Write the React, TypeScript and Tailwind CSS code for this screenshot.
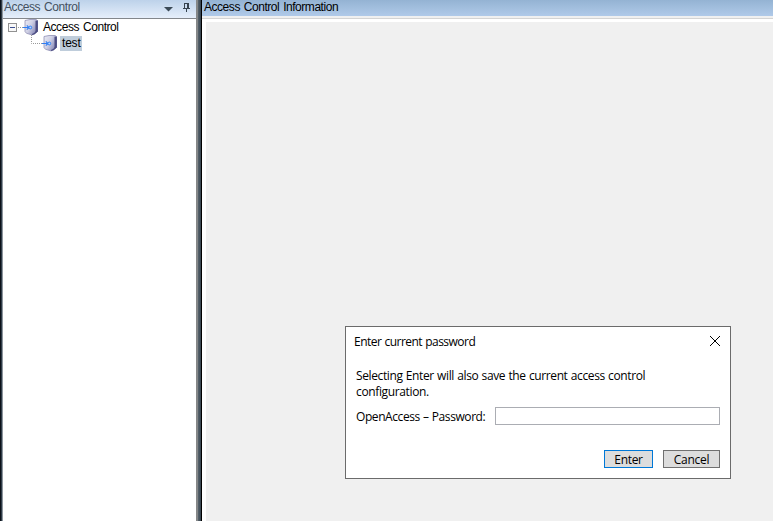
function ShieldIcon() {
  return (
    <svg width="17" height="17" viewBox="0 0 17 17" className="block shrink-0">
      <defs>
        <linearGradient id="shield" x1="0" y1="0" x2="1" y2="0.6">
          <stop offset="0" stopColor="#ececf5" />
          <stop offset="0.5" stopColor="#cfd0e4" />
          <stop offset="1" stopColor="#8789b6" />
        </linearGradient>
      </defs>
      <path d="M2 1.5 L7 0.5 H13 L14.5 1.5 V12.5 L11.5 15 L9 15.9 L3.5 14.3 L2 12.5Z" fill="url(#shield)" stroke="#9091b5" strokeWidth="0.8" />
      <path d="M12.5 1.7 L14.9 1.5 V12.5 L11.5 15.3 L9 16 V15 L11.5 13.7 L12.5 12Z" fill="#4c4d82" />
      <path d="M0 8.5 H6 M3.8 6.3 L6 8.5 L3.8 10.7" fill="none" stroke="#2f7df2" strokeWidth="1.1" />
      <circle cx="7.3" cy="8.5" r="1.4" fill="#b9d6ff" stroke="#2f7df2" strokeWidth="1" />
    </svg>
  );
}

function Tree() {
  return (
    <div className="text-[12px] leading-4 text-black">
      <div className="flex h-4 items-center pl-[5px]">
        <svg width="9" height="9" className="shrink-0">
          <rect x="0.5" y="0.5" width="8" height="8" fill="#f8f8f8" stroke="#919191" />
          <path d="M2 4.5H7" stroke="#3c4f91" />
        </svg>
        <svg width="6" height="1" className="shrink-0"><path d="M1 .5H6" stroke="#999" strokeDasharray="1 1" /></svg>
        <ShieldIcon />
        <span className="ml-[3px] whitespace-nowrap tracking-[-0.44px] [word-spacing:1px]">Access Control</span>
      </div>
      <div className="flex h-4 items-center pl-[28px]">
        <svg width="11" height="16" className="shrink-0"><path d="M.5 0V8.5H11" fill="none" stroke="#999" strokeDasharray="1 1" /></svg>
        <ShieldIcon />
        <span className="ml-px h-[15px] w-[22px] bg-[#bfcddb] pl-[2px] leading-[15px] tracking-[-0.2px]">test</span>
      </div>
    </div>
  );
}

function PasswordDialog() {
  return (
    <div className="absolute left-[345px] top-[326px] flex h-[153px] w-[386px] flex-col border border-[#6b6b6b] bg-white font-['Open_Sans','Noto_Sans',sans-serif] text-[12px] text-black">
      <div className="flex h-[30px] items-center justify-between pl-2 pr-[9px]">
        <span className="whitespace-nowrap tracking-[-0.52px] [word-spacing:0.5px]">Enter current password</span>
        <svg width="12" height="12" className="-mt-[2px]"><path d="M1 1L11 11M11 1L1 11" stroke="#000" strokeWidth="1" /></svg>
      </div>
      <div className="pl-[10px] pt-[11px] leading-4">
        <p className="whitespace-nowrap tracking-[-0.38px] [word-spacing:0.5px]">Selecting Enter will also save the current access control</p>
        <p className="whitespace-nowrap tracking-[-0.36px]">configuration.</p>
      </div>
      <div className="mt-[7px] flex h-[18px] items-center justify-between pl-[10px] pr-[10px]">
        <label htmlFor="password" className="whitespace-nowrap pt-[2px] tracking-[-0.42px] [word-spacing:0.5px]">OpenAccess – Password:</label>
        <input id="password" type="password" className="h-[18px] w-[225px] border border-[#abadb3] bg-white outline-none" />
      </div>
      <div className="mt-[25px] flex justify-end gap-[10px] pr-[10px]">
        <button className="h-[18px] w-[49px] border border-[#0078d7] bg-[#dddddd] pt-px leading-4 tracking-[-0.3px]">Enter</button>
        <button className="h-[18px] w-[57px] border border-[#707070] bg-[#dddddd] pt-px leading-4 tracking-[-0.3px]">Cancel</button>
      </div>
    </div>
  );
}

export default function App() {
  return (
    <div className="relative flex h-[521px] w-[773px] overflow-hidden bg-[#f0f0f0] font-['Liberation_Sans',Arial,sans-serif]">
      <div className="w-[2px] shrink-0 border-r border-[#2f3c48] bg-[#0b1118]" />
      <aside className="flex w-[196px] shrink-0 flex-col border-l border-r-2 border-l-[#8e959d] border-r-[#858788] bg-white">
        <header className="flex h-[19px] items-start border-b border-[#83878c] bg-linear-to-b from-[#bdd2ea] to-[#e6effb] pl-px text-[12px] leading-[14px] text-[#44515f]">
          <span className="grow whitespace-nowrap tracking-[-0.42px] [word-spacing:1px]">Access Control</span>
          <svg width="9" height="5" className="mr-[10px] mt-[7px]"><path d="M0 0H9L4.5 4.5Z" fill="#3b4a57" /></svg>
          <svg width="7" height="9" className="mr-[6px] mt-[3px]" shapeRendering="crispEdges"><path d="M1.5 5V.5H5.5V5M4.5 0V5M0 5.5H7M3.5 6V9" fill="none" stroke="#35424e" /></svg>
        </header>
        <Tree />
      </aside>
      <div className="w-[4px] shrink-0 border-r border-black bg-linear-to-r from-[#59656e] to-[#35424d]" />
      <main className="flex grow flex-col">
        <header className="h-4 bg-linear-to-b from-[#94b3d3] to-[#b0cae9] pl-[2px] text-[12px] leading-[14px] text-black">
          <span className="whitespace-nowrap tracking-[-0.46px] [word-spacing:1px]">Access Control Information</span>
        </header>
        <div className="h-[3px] border-b border-[#d4d4d4] bg-[#f0f0f0]" />
        <div className="grow border-l-4 border-t-[3px] border-white bg-[#f0f0f0]" />
      </main>
      <PasswordDialog />
    </div>
  );
}
